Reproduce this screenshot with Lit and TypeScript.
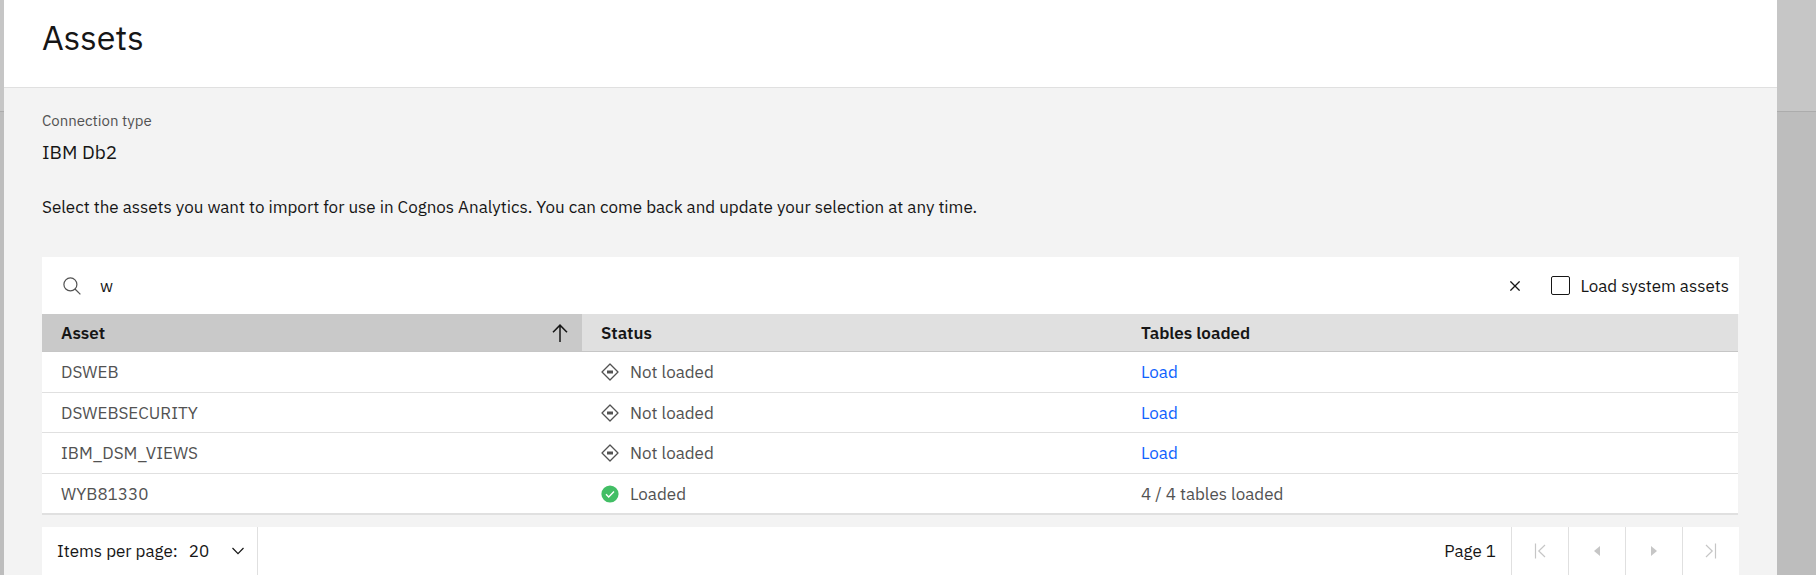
import { LitElement, html, css, svg, nothing } from "lit";
import { customElement, property, state } from "lit/decorators.js";

type Asset = { name: string; loaded: boolean; tables?: string };

const ASSETS: Asset[] = [
  { name: "DSWEB", loaded: false },
  { name: "DSWEBSECURITY", loaded: false },
  { name: "IBM_DSM_VIEWS", loaded: false },
  { name: "WYB81330", loaded: true, tables: "4 / 4 tables loaded" },
];

const searchIcon = svg`<svg width="18" height="18" viewBox="0 0 18 18" fill="none" stroke="#525252" stroke-width="1.2" aria-hidden="true"><circle cx="7.4" cy="7.4" r="6.5"/><path d="M12 12 17.4 17.4"/></svg>`;
const closeIcon = svg`<svg width="10" height="10" viewBox="0 0 10 10" fill="none" stroke="#161616" stroke-width="1.3" aria-hidden="true"><path d="M.4.4 9.6 9.6M9.6.4.4 9.6"/></svg>`;
const sortIcon = svg`<svg width="16" height="18" viewBox="0 0 16 18" fill="none" stroke="#161616" stroke-width="1.5" aria-hidden="true"><path d="M8 18V1M1 8.2 8 1.1 15 8.2"/></svg>`;
const notLoadedIcon = svg`<svg width="18" height="18" viewBox="0 0 18 18" aria-hidden="true"><path d="M9 1 17 9 9 17 1 9Z" fill="none" stroke="#525252" stroke-width="1.3" stroke-linejoin="round"/><path d="M6 7.5h6v3h-6z" fill="#525252"/></svg>`;
const loadedIcon = svg`<svg width="18" height="18" viewBox="0 0 18 18" aria-hidden="true"><circle cx="9" cy="9" r="8.6" fill="#42be65"/><path d="M5 9.3 7.7 12 13 6.6" fill="none" stroke="#fff" stroke-width="1.4"/></svg>`;
const chevronIcon = svg`<svg class="chevron" width="12" height="8" viewBox="0 0 12 8" fill="none" stroke="#161616" stroke-width="1.2" aria-hidden="true"><path d="M.5 1 6 6.6 11.5 1"/></svg>`;
const firstIcon = svg`<svg width="12" height="16" viewBox="0 0 12 16" fill="none" stroke="#c6c6c6" stroke-width="1.2" aria-hidden="true"><path d="M1.5.5v15M11 2 4.8 8 11 14"/></svg>`;
const prevIcon = svg`<svg width="6" height="10" viewBox="0 0 6 10" fill="#c6c6c6" aria-hidden="true"><path d="M6 0v10L0 5z"/></svg>`;
const nextIcon = svg`<svg width="6" height="10" viewBox="0 0 6 10" fill="#c6c6c6" aria-hidden="true"><path d="M0 0v10l6-5z"/></svg>`;
const lastIcon = svg`<svg width="12" height="16" viewBox="0 0 12 16" fill="none" stroke="#c6c6c6" stroke-width="1.2" aria-hidden="true"><path d="M10.5.5v15M1 2 7.2 8 1 14"/></svg>`;

@customElement("asset-table")
export class AssetTable extends LitElement {
  @property({ attribute: false }) assets: Asset[] = [];

  static styles = css`
    :host { display: block; margin-right: 1px; }
    * { box-sizing: border-box; }
    table {
      width: 100%;
      border-collapse: separate;
      border-spacing: 0;
      table-layout: fixed;
      font-size: 17px;
      line-height: 24px;
      color: #525252;
      background: #fff;
      border-bottom: 1px solid #e0e0e0;
    }
    .asset, .status { width: 31.84%; }
    th, td { padding: 0 19px; text-align: left; vertical-align: middle; }
    th { height: 38px; color: #161616; font-weight: 600; background: #e0e0e0; border-bottom: 1px solid #c6c6c6; }
    th.sorted { padding: 0; background: #c9c9c9; }
    .sort {
      display: flex;
      align-items: center;
      justify-content: space-between;
      width: 100%;
      border: 0;
      padding: 0 14px 0 19px;
      background: none;
      font: inherit;
      color: inherit;
    }
    td { height: 41px; border-bottom: 1px solid #e0e0e0; }
    tr:nth-child(even) td { height: 40px; }
    .state { display: flex; align-items: center; gap: 11px; }
    a { color: #0f62fe; text-decoration: none; }
  `;

  render() {
    return html`
      <table aria-label="Assets">
        <thead>
          <tr>
            <th class="asset sorted" scope="col" aria-sort="ascending">
              <button class="sort" type="button">Asset ${sortIcon}</button>
            </th>
            <th class="status" scope="col">Status</th>
            <th scope="col">Tables loaded</th>
          </tr>
        </thead>
        <tbody>
          ${this.assets.map(
            (a) => html`
              <tr>
                <td>${a.name}</td>
                <td>
                  <div class="state">
                    ${a.loaded ? loadedIcon : notLoadedIcon}
                    <span>${a.loaded ? "Loaded" : "Not loaded"}</span>
                  </div>
                </td>
                <td>${a.loaded ? a.tables : html`<a href="#">Load</a>`}</td>
              </tr>
            `
          )}
        </tbody>
      </table>
    `;
  }
}

@customElement("app-root")
export class AppRoot extends LitElement {
  @state() private query = "w";

  static styles = css`
    :host {
      display: grid;
      grid-template-columns: 4px minmax(0, 1fr) 39px;
      min-height: 100vh;
      font-family: "IBM Plex Sans", Roboto, sans-serif;
      font-size: 17px;
      line-height: 24px;
      color: #161616;
    }
    * { box-sizing: border-box; }
    .backdrop { display: flex; flex-direction: column; background: #bdbdbd; }
    .backdrop-top { height: 112px; background: #c6c6c6; border-bottom: 1px solid #acacac; }
    .panel { display: flex; flex-direction: column; background: #f3f3f3; }
    header { height: 88px; padding: 16px 38px; background: #fff; border-bottom: 1px solid #e0e0e0; }
    h1 { margin: 0; font-size: 34px; line-height: 42px; font-weight: 400; }
    main { padding: 0 38px; }
    dl { margin: 21px 0 0; }
    dt { font-size: 15px; line-height: 24px; color: #525252; }
    dd { margin: 7px 0 0; font-size: 19px; line-height: 24px; }
    .intro { margin: 31px 0 38px; line-height: 24px; }
    .toolbar { display: flex; align-items: center; height: 57px; padding: 0 10px 0 21px; background: #fff; }
    .search { display: flex; flex: 1; align-items: center; gap: 19px; }
    .search input {
      flex: 1;
      min-width: 0;
      padding: 0;
      border: 0;
      outline: 0;
      background: none;
      font: inherit;
      color: inherit;
    }
    .search label { display: flex; }
    button { display: flex; align-items: center; justify-content: center; border: 0; padding: 0; background: none; }
    .clear { width: 32px; height: 32px; }
    .check { display: flex; align-items: center; gap: 10px; margin-left: 20px; }
    .check input {
      appearance: none;
      width: 19px;
      height: 19px;
      margin: 0;
      border: 1px solid #161616;
      border-radius: 2px;
      background: #fff;
    }
    .pagination { display: flex; align-items: stretch; height: 48px; margin-top: 12px; background: #fff; }
    .size { display: grid; grid-template-columns: auto 55px; align-items: center; gap: 11px; padding: 0 13px 0 15px; border-right: 1px solid #e0e0e0; }
    .picker { display: grid; align-items: center; }
    .picker > * { grid-area: 1 / 1; }
    .picker select {
      appearance: none;
      width: 100%;
      padding: 0;
      border: 0;
      background: none;
      font: inherit;
      color: inherit;
    }
    .chevron { justify-self: end; pointer-events: none; }
    .page { margin: 0 15px 0 auto; align-self: center; }
    .step { width: 57px; border-left: 1px solid #e0e0e0; }
  `;

  private clear() {
    this.query = "";
  }

  render() {
    const steps = [
      ["First page", firstIcon],
      ["Previous page", prevIcon],
      ["Next page", nextIcon],
      ["Last page", lastIcon],
    ] as const;
    return html`
      <div class="backdrop"><div class="backdrop-top"></div></div>
      <section class="panel" aria-labelledby="title">
        <header><h1 id="title">Assets</h1></header>
        <main>
          <dl>
            <dt>Connection type</dt>
            <dd>IBM Db2</dd>
          </dl>
          <p class="intro">
            Select the assets you want to import for use in Cognos Analytics. You can come back and update your selection at any time.
          </p>
          <div class="toolbar">
            <div class="search">
              <label for="search" aria-label="Search assets">${searchIcon}</label>
              <input id="search" type="text" .value=${this.query}
                @input=${(e: Event) => (this.query = (e.target as HTMLInputElement).value)} />
            </div>
            ${this.query
              ? html`<button class="clear" type="button" aria-label="Clear search" @click=${this.clear}>${closeIcon}</button>`
              : nothing}
            <label class="check"><input type="checkbox" />Load system assets</label>
          </div>
          <asset-table .assets=${ASSETS}></asset-table>
          <nav class="pagination" aria-label="Pagination">
            <div class="size">
              <label for="size">Items per page:</label>
              <div class="picker">
                <select id="size"><option>20</option></select>
                ${chevronIcon}
              </div>
            </div>
            <span class="page">Page 1</span>
            ${steps.map(([label, icon]) => html`<button class="step" type="button" disabled aria-label=${label}>${icon}</button>`)}
          </nav>
        </main>
      </section>
      <div class="backdrop"><div class="backdrop-top"></div></div>
    `;
  }
}
